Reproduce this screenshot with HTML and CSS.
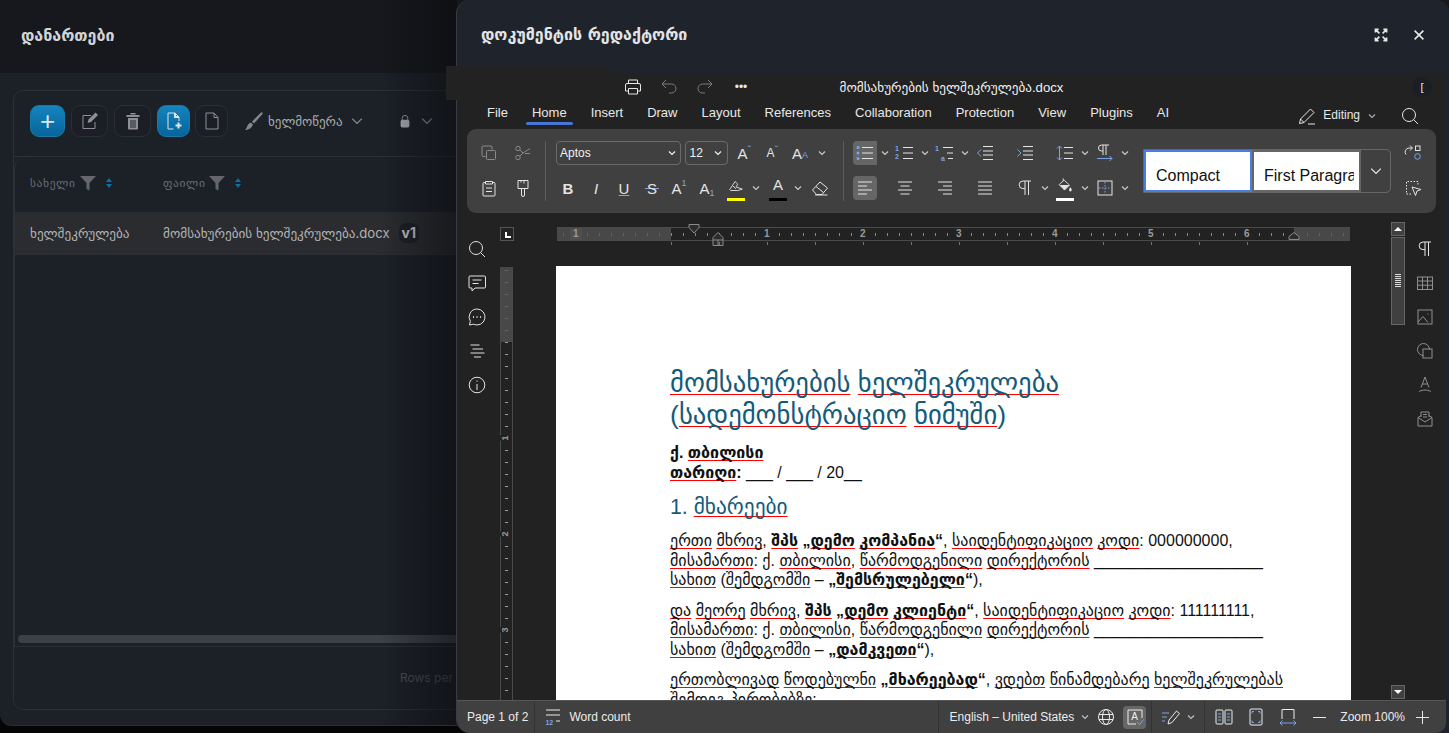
FILE: index.html
```html
<!DOCTYPE html>
<html lang="ka">
<head>
    <meta charset="UTF-8">
    <meta name="viewport" content="width=device-width, initial-scale=1.0">
    <title>დანართები</title>
    <link rel="stylesheet" href="styles.css">
</head>
<body>
    <svg class="sprite" xmlns="http://www.w3.org/2000/svg">
        <symbol id="i-caret" viewBox="0 0 10 10"><path d="M2 3.500l3 3 3-3"/></symbol>
        <symbol id="i-print" viewBox="0 0 20 20"><path d="M5.500 6.500V3h9v3.500M5.500 14H2.500V8A1.500 1.500 0 0 1 4 6.500h12A1.500 1.500 0 0 1 17.500 8v6h-3M5.500 11.500h9V17h-9z"/></symbol>
        <symbol id="i-undo" viewBox="0 0 20 20"><path d="M7 3L3 7l4 4M3 7h9.500a4.500 4.500 0 0 1 0 9H10"/></symbol>
        <symbol id="i-redo" viewBox="0 0 20 20"><path d="M13 3l4 4-4 4M17 7H7.500a4.500 4.500 0 0 0 0 9H10"/></symbol>
        <symbol id="i-copy" viewBox="0 0 20 20"><path d="M6.500 13.500H4a1 1 0 0 1-1-1V4a1 1 0 0 1 1-1h8a1 1 0 0 1 1 1v2.500"/><rect x="7.500" y="7.500" width="9" height="9" rx="1"/></symbol>
        <symbol id="i-cut" viewBox="0 0 20 20"><circle cx="5" cy="5.500" r="2.200"/><circle cx="5" cy="14.500" r="2.200"/><path d="M6.800 6.800L10 10l-3.200 3.200M10 10l7-4.500M12 10.500h5"/></symbol>
        <symbol id="i-paste" viewBox="0 0 20 20"><path d="M6.500 4.500H5a1 1 0 0 0-1 1V17a1 1 0 0 0 1 1h10a1 1 0 0 0 1-1V5.500a1 1 0 0 0-1-1h-1.500M6.500 3.500h7v2.500h-7zM7 10h6M7 13.500h6"/></symbol>
        <symbol id="i-painter" viewBox="0 0 20 20"><path d="M5 2.500h10v8H5zM11 2.500v3M8 2.500v2M5 10.500h3.500V17a1.500 1.500 0 0 0 3 0v-6.500H15"/></symbol>
        <symbol id="i-bullets" viewBox="0 0 20 20"><path d="M7 4.500h11M7 10h11M7 15.500h11"/><g class="accent-fill"><circle cx="3" cy="4.500" r="1.500"/><circle cx="3" cy="10" r="1.500"/><circle cx="3" cy="15.500" r="1.500"/></g></symbol>
        <symbol id="i-numbers" viewBox="0 0 20 20"><path d="M8 4.500h10M8 10h10M8 15.500h10"/></symbol>
        <symbol id="i-multi" viewBox="0 0 20 20"><path d="M8 4.500h10M12 10h6M13 15.500h5"/></symbol>
        <symbol id="i-outdent" viewBox="0 0 20 20"><path d="M8 3.500h10M8 8h10M8 12h10M8 16.500h10"/><path class="accent" d="M6 6.500L2.500 10 6 13.500"/></symbol>
        <symbol id="i-indent" viewBox="0 0 20 20"><path d="M8 3.500h10M8 8h10M8 12h10M8 16.500h10"/><path class="accent" d="M2.500 6.500L6 10l-3.500 3.500"/></symbol>
        <symbol id="i-spacing" viewBox="0 0 20 20"><path d="M9 4.500h9M9 10h9M9 15.500h9"/><path class="accent" d="M4.500 3v14M2 5.500L4.500 3 7 5.500M2 14.500L4.500 17 7 14.500"/></symbol>
        <symbol id="i-pilcrow-dir" viewBox="0 0 20 20"><path d="M8 2v10M11 2v10M14 2H6.500a3 3 0 0 0 0 6H8"/><path class="accent" d="M2 15.500h15M14.500 13l2.500 2.500-2.500 2.500"/></symbol>
        <symbol id="i-left" viewBox="0 0 20 20"><path d="M3 4h14M3 8h9M3 12h14M3 16h9"/></symbol>
        <symbol id="i-center" viewBox="0 0 20 20"><path d="M3 4h14M5.500 8h9M3 12h14M5.500 16h9"/></symbol>
        <symbol id="i-right" viewBox="0 0 20 20"><path d="M3 4h14M8 8h9M3 12h14M8 16h9"/></symbol>
        <symbol id="i-justify" viewBox="0 0 20 20"><path d="M3 4h14M3 8h14M3 12h14M3 16h14"/></symbol>
        <symbol id="i-pilcrow" viewBox="0 0 20 20"><path d="M10 3v14M13.500 3v14M16 3H8a3.800 3.800 0 0 0 0 7.600h2"/></symbol>
        <symbol id="i-fill" viewBox="0 0 20 20"><path d="M8 1.500v3M3.500 8.500L9 3.500l6 5.500-5.500 5.500z"/><path class="solid" d="M4 9h11l-5.500 5.500zM16 11.500c1 1.500 1.500 2 1.500 3a1.500 1.500 0 0 1-3 0c0-1 .5-1.500 1.500-3z"/></symbol>
        <symbol id="i-borders" viewBox="0 0 20 20"><rect x="3" y="3" width="14" height="14"/><path class="accent dotted" d="M10 4v12M4 10h12"/></symbol>
        <symbol id="i-highlight" viewBox="0 0 20 20"><path d="M3 14l6-9 3 3-2 3 7 2.500-5 1.500H4zM6.500 10l3.500 3"/></symbol>
        <symbol id="i-eraser" viewBox="0 0 20 20"><path d="M2.500 12l7.500-8 7.500 6-5.500 6.500H6.500zM6 8.500l7.500 6M5 17h12.500"/></symbol>
        <symbol id="i-replace" viewBox="0 0 20 20"><path d="M9 5H6a4 4 0 0 0-3 6.500M7 2.500L9.500 5 7 7.500"/><rect x="12.500" y="3" width="4.500" height="4.500"/><circle class="accent" cx="14.500" cy="13.500" r="2.800"/></symbol>
        <symbol id="i-select" viewBox="0 0 20 20"><path class="dotted" d="M8 16H3.500V3.500H15V8"/><path d="M9 9l9 2.500-4 1.500-1.500 4.500z"/></symbol>
        <symbol id="i-pen" viewBox="0 0 20 20"><path d="M2.500 17.500l1-4.500L13.500 3l3.500 3.500L7 16.500zM3.500 13l3.500 3.500M11 18h7"/></symbol>
        <symbol id="i-search" viewBox="0 0 20 20"><circle cx="9" cy="9" r="6.500"/><path d="M13.800 13.800L18 18"/></symbol>
        <symbol id="i-comment" viewBox="0 0 20 20"><path d="M3 3h14.500a1 1 0 0 1 1 1v10a1 1 0 0 1-1 1H8l-3 3v-3H3a1 1 0 0 1-1-1V4a1 1 0 0 1 1-1zM5.500 7h9M5.500 10.500h6"/></symbol>
        <symbol id="i-chat" viewBox="0 0 20 20"><path d="M10 2a8 8 0 1 1-3.500 15.200L2.500 18l.8-3.800A8 8 0 0 1 10 2z"/><path class="thick" d="M6 10h.9M9.600 10h.9M13.200 10h.9"/></symbol>
        <symbol id="i-toc" viewBox="0 0 20 20"><path d="M3.500 4h9M5.500 8h10.500M3.500 12h14M7 16h7"/></symbol>
        <symbol id="i-info" viewBox="0 0 20 20"><circle cx="10" cy="10" r="7.800"/><path d="M10 9v6M10 5.500v1.200"/></symbol>
        <symbol id="i-table" viewBox="0 0 20 20"><rect x="2.500" y="4" width="15" height="12.500"/><path d="M2.500 8h15M2.500 12.200h15M7.500 4v12.500M12.500 4v12.500"/></symbol>
        <symbol id="i-image" viewBox="0 0 20 20"><rect x="3" y="3" width="14" height="14"/><path d="M3 15l5-5.500 5 6M12.500 7h1"/></symbol>
        <symbol id="i-shape" viewBox="0 0 20 20"><path d="M8.500 14.500a6 6 0 1 1 6-6"/><rect x="8" y="8" width="9" height="9"/></symbol>
        <symbol id="i-arttext" viewBox="0 0 20 20"><path d="M6 12.500L10 2l4 10.500M7.200 9h5.600M4 16.500c4-2 8-2 12 0"/></symbol>
        <symbol id="i-mail" viewBox="0 0 20 20"><path d="M6 8V3h8v5M3 8.500l3-2M17 8.500l-3-2M3 8.500V17h14V8.500L10 13zM8 5.500h4M8 8h4"/></symbol>
        <symbol id="i-wordcount" viewBox="0 0 20 20"><path d="M3 3h14M3 8h14M13 14h4"/></symbol>
        <symbol id="i-globe" viewBox="0 0 20 20"><circle cx="10" cy="10" r="7.500"/><ellipse cx="10" cy="10" rx="3.500" ry="7.500"/><path d="M3 7.500h14M3 12.500h14"/></symbol>
        <symbol id="i-spell" viewBox="0 0 20 20"><path d="M11 17H3V3h14v8"/><path class="accent" d="M12 15l2.500 2.500 4-5"/></symbol>
        <symbol id="i-track" viewBox="0 0 20 20"><path class="accent" d="M1 6h7M1 10h5M1 14h3"/><path d="M7 17l1-4 7.500-9 3 2.500-7.500 9z"/></symbol>
        <symbol id="i-pages" viewBox="0 0 20 20"><rect x="2" y="3" width="7" height="14" rx="1"/><rect x="11" y="3" width="7" height="14" rx="1"/><path class="accent" d="M3.800 7h3.400M3.800 10h3.400M3.800 13h3.400M12.800 7h3.400M12.800 10h3.400M12.800 13h3.400"/></symbol>
        <symbol id="i-fitpage" viewBox="0 0 20 20"><rect x="4" y="2" width="12" height="16" rx="1"/><path class="accent" d="M6 6.500V4.500h2M14 6.500V4.500h-2M6 13.500v2h2M14 13.500v2h-2"/></symbol>
        <symbol id="i-fitwidth" viewBox="0 0 20 20"><path d="M4 12V2.500h12V12"/><path class="accent" d="M2 16h16M4.500 13.500L2 16l2.500 2.500M15.500 13.500L18 16l-2.500 2.500"/></symbol>
        <symbol id="i-funnel" viewBox="0 0 16 16"><path class="solid" d="M0 1h16L9.500 8v7.500l-3-1.500V8z"/></symbol>
        <symbol id="i-edit" viewBox="0 0 20 20"><path d="M15 11v6.500H3v-13h8"/><path class="solid" d="M7.500 12l1-3.500L15.500 1.500 18 4l-7 7z"/></symbol>
        <symbol id="i-trash" viewBox="0 0 20 20"><path class="solid" d="M3.500 4h13v2h-13zM7.500 2h5v1.500h-5zM5 7h10v10.500a1 1 0 0 1-1 1H6a1 1 0 0 1-1-1z"/><path class="cut" d="M8 9v8M10 9v8M12 9v8"/></symbol>
        <symbol id="i-docadd" viewBox="0 0 20 20"><path d="M9.500 18H4V2h7l4 4v4"/><path class="thick" d="M11 2v4h4M14.500 11.500v6M11.500 14.500h6"/></symbol>
        <symbol id="i-doc" viewBox="0 0 20 20"><path d="M4 2h8l4 4.500V18H4zM12 2v4.500h4"/></symbol>
        <symbol id="i-brush" viewBox="0 0 20 20"><path class="solid" d="M8 10.500L17.500 1l1.500 1.500L10 12.500zM7 11.500l2 2c-1 3-4 5.500-8 5.500 2.500-1.500 1.500-6 6-7.500z"/></symbol>
        <symbol id="i-lock" viewBox="0 0 20 20"><path d="M6.500 9V6.500a3.500 3.500 0 0 1 7 0V9"/><rect class="solid" x="4.500" y="8.500" width="11" height="9.500" rx="2"/></symbol>
        <symbol id="i-expand" viewBox="0 0 20 20"><path class="thick" d="M12 8l5-5M13 3h4v4M8 8L3 3M7 3H3v4M12 12l5 5M13 17h4v-4M8 12l-5 5M7 17H3v-4"/></symbol>
        <symbol id="i-close" viewBox="0 0 20 20"><path class="thick" d="M4.500 4.500l11 11M15.500 4.500l-11 11"/></symbol>
        <symbol id="i-tab-down" viewBox="0 0 12 10"><path d="M1 .5h10v3L6 9 1 3.500z"/></symbol>
        <symbol id="i-tab-up" viewBox="0 0 12 14"><path d="M6 .5l5 5v8H1v-8zM1 8h10M6 8v5.500"/></symbol>
        <symbol id="i-tab-end" viewBox="0 0 12 8"><path d="M6 .5l5 4v3H1v-3z"/></symbol>
    </svg>

    <div class="back-panel">
        <header class="back-head">დანართები</header>
        <div class="card">
            <div class="card-tools">
                <button class="tool-btn primary plus">+</button>
                <button class="tool-btn wide"><svg class="ic"><use href="#i-edit"/></svg></button>
                <button class="tool-btn wide"><svg class="ic"><use href="#i-trash"/></svg></button>
                <button class="tool-btn primary"><svg class="ic"><use href="#i-docadd"/></svg></button>
                <button class="tool-btn last"><svg class="ic"><use href="#i-doc"/></svg></button>
                <span class="tool-menu">
                    <svg class="ic"><use href="#i-brush"/></svg>
                    ხელმოწერა
                    <svg class="caret-lg"><use href="#i-caret"/></svg>
                </span>
                <span class="tool-menu lock-menu">
                    <svg class="ic-sm"><use href="#i-lock"/></svg>
                    <svg class="caret-lg"><use href="#i-caret"/></svg>
                </span>
            </div>
            <div class="table-wrap">
                <div class="t-head">
                    <div class="t-col first">სახელი <svg class="funnel"><use href="#i-funnel"/></svg><span class="sort"></span></div>
                    <div class="t-col">ფაილი <svg class="funnel"><use href="#i-funnel"/></svg><span class="sort"></span></div>
                </div>
                <div class="t-row">
                    <div class="t-col first">ხელშეკრულება</div>
                    <div class="t-col">მომსახურების ხელშეკრულება.docx <span class="badge">v1</span></div>
                </div>
                <div class="t-space"></div>
                <div class="h-scroll"></div>
            </div>
            <div class="card-foot">Rows per</div>
        </div>
    </div>

    <aside class="drawer">
        <header class="drawer-head">
            <h2>დოკუმენტის რედაქტორი</h2>
            <svg class="head-ic"><use href="#i-expand"/></svg>
            <svg class="head-ic close"><use href="#i-close"/></svg>
        </header>

        <div class="editor">
            <div class="title-bar">
                <div class="quick">
                    <svg class="ic"><use href="#i-print"/></svg>
                    <svg class="ic dim"><use href="#i-undo"/></svg>
                    <svg class="ic dim"><use href="#i-redo"/></svg>
                    <span class="dots">•••</span>
                </div>
                <div class="doc-name">მომსახურების ხელშეკრულება.docx</div>
                <div class="avatar">[</div>
            </div>

            <nav class="tabs">
                <a>File</a><a class="active">Home</a><a>Insert</a><a>Draw</a><a>Layout</a><a>References</a><a>Collaboration</a><a>Protection</a><a>View</a><a>Plugins</a><a>AI</a>
                <span class="tabs-right">
                    <svg class="ic"><use href="#i-pen"/></svg>
                    <span class="edit-label">Editing</span>
                    <svg class="caret"><use href="#i-caret"/></svg>
                    <svg class="ic search"><use href="#i-search"/></svg>
                </span>
            </nav>

            <div class="ribbon">
                <div class="rb-clip">
                    <span class="cell dim"><svg class="ic"><use href="#i-copy"/></svg></span>
                    <span class="cell dim"><svg class="ic"><use href="#i-cut"/></svg></span>
                    <span class="cell"><svg class="ic"><use href="#i-paste"/></svg></span>
                    <span class="cell"><svg class="ic"><use href="#i-painter"/></svg></span>
                </div>
                <div class="rb-sep"></div>
                <div class="rb-font">
                    <div class="font-top">
                        <span class="combo font-name">Aptos<svg class="caret"><use href="#i-caret"/></svg></span>
                        <span class="combo font-size">12<svg class="caret"><use href="#i-caret"/></svg></span>
                        <span class="cell w28 letter">A<i class="up">ˆ</i></span>
                        <span class="cell w28 letter small">A<i class="up">ˇ</i></span>
                        <span class="cell w28 letter">A<i class="lo">A</i></span>
                        <span class="cell w16"><svg class="caret"><use href="#i-caret"/></svg></span>
                    </div>
                    <div class="font-bottom">
                        <span class="cell letter"><b>B</b></span>
                        <span class="cell letter"><em>I</em></span>
                        <span class="cell letter"><u>U</u></span>
                        <span class="cell letter strike">S</span>
                        <span class="cell letter">A<i class="sup">1</i></span>
                        <span class="cell letter">A<i class="sub">1</i></span>
                        <span class="cell stack"><svg class="ic"><use href="#i-highlight"/></svg><i class="swatch yellow"></i></span>
                        <span class="cell"><svg class="caret"><use href="#i-caret"/></svg></span>
                        <span class="cell stack letter">A<i class="swatch black"></i></span>
                        <span class="cell"><svg class="caret"><use href="#i-caret"/></svg></span>
                        <span class="cell"><svg class="ic"><use href="#i-eraser"/></svg></span>
                    </div>
                </div>
                <div class="rb-sep"></div>
                <div class="rb-para">
                    <span class="cell on"><svg class="ic"><use href="#i-bullets"/></svg></span>
                    <span class="cell"><svg class="caret"><use href="#i-caret"/></svg></span>
                    <span class="cell"><svg class="ic"><use href="#i-numbers"/></svg><i class="mini top">1</i><i class="mini bot">2</i></span>
                    <span class="cell"><svg class="caret"><use href="#i-caret"/></svg></span>
                    <span class="cell"><svg class="ic"><use href="#i-multi"/></svg><i class="mini top">1</i><i class="mini bot shifted">a</i></span>
                    <span class="cell"><svg class="caret"><use href="#i-caret"/></svg></span>
                    <span class="cell"><svg class="ic"><use href="#i-outdent"/></svg></span>
                    <span class="cell"></span>
                    <span class="cell"><svg class="ic"><use href="#i-indent"/></svg></span>
                    <span class="cell"></span>
                    <span class="cell"><svg class="ic"><use href="#i-spacing"/></svg></span>
                    <span class="cell"><svg class="caret"><use href="#i-caret"/></svg></span>
                    <span class="cell"><svg class="ic"><use href="#i-pilcrow-dir"/></svg></span>
                    <span class="cell"><svg class="caret"><use href="#i-caret"/></svg></span>

                    <span class="cell on round"><svg class="ic"><use href="#i-left"/></svg></span>
                    <span class="cell"></span>
                    <span class="cell"><svg class="ic"><use href="#i-center"/></svg></span>
                    <span class="cell"></span>
                    <span class="cell"><svg class="ic"><use href="#i-right"/></svg></span>
                    <span class="cell"></span>
                    <span class="cell"><svg class="ic"><use href="#i-justify"/></svg></span>
                    <span class="cell"></span>
                    <span class="cell"><svg class="ic"><use href="#i-pilcrow"/></svg></span>
                    <span class="cell"><svg class="caret"><use href="#i-caret"/></svg></span>
                    <span class="cell stack"><svg class="ic"><use href="#i-fill"/></svg><i class="swatch white"></i></span>
                    <span class="cell"><svg class="caret"><use href="#i-caret"/></svg></span>
                    <span class="cell"><svg class="ic"><use href="#i-borders"/></svg></span>
                    <span class="cell"><svg class="caret"><use href="#i-caret"/></svg></span>
                </div>
                <div class="styles">
                    <div class="style-item selected">Compact</div>
                    <div class="style-item"><span>First Paragraph</span></div>
                    <div class="style-more"><svg class="caret-lg"><use href="#i-caret"/></svg></div>
                </div>
                <div class="rb-tail">
                    <span class="cell"><svg class="ic"><use href="#i-replace"/></svg></span>
                    <span class="cell"><svg class="ic"><use href="#i-select"/></svg></span>
                </div>
            </div>

            <div class="ed-body">
                <div class="side side-left">
                    <svg class="ic"><use href="#i-search"/></svg>
                    <svg class="ic"><use href="#i-comment"/></svg>
                    <svg class="ic"><use href="#i-chat"/></svg>
                    <svg class="ic"><use href="#i-toc"/></svg>
                    <svg class="ic"><use href="#i-info"/></svg>
                </div>

                <div class="ed-main">
                    <div class="ruler-row">
                        <div class="ruler-corner"></div>
                        <div class="h-ruler">
                            <div class="hr-margin left"></div>
                            <div class="hr-mid"></div>
                            <div class="hr-margin right"></div>
                            <span class="hr-num on-margin" style="left:13px">1</span>
                            <span class="hr-num" style="left:204px">1</span>
                            <span class="hr-num" style="left:300px">2</span>
                            <span class="hr-num" style="left:396px">3</span>
                            <span class="hr-num" style="left:492px">4</span>
                            <span class="hr-num" style="left:588px">5</span>
                            <span class="hr-num" style="left:684px">6</span>
                            <svg class="marker m-top"><use href="#i-tab-down"/></svg>
                            <svg class="marker m-first"><use href="#i-tab-up"/></svg>
                            <svg class="marker m-last"><use href="#i-tab-end"/></svg>
                        </div>
                    </div>
                    <div class="doc-row">
                        <div class="v-ruler">
                            <div class="vr-margin"></div>
                            <span class="vr-num" style="top:166px">1</span>
                            <span class="vr-num" style="top:262px">2</span>
                            <span class="vr-num" style="top:358px">3</span>
                        </div>
                        <article class="page">
                            <h1><span class="sp">მომსახურების</span> <span class="sp">ხელშეკრულება</span><br>(<span class="sp">სადემონსტრაციო</span> <span class="sp">ნიმუში</span>)</h1>
                            <p class="lines"><b>ქ. <span class="sp">თბილისი</span></b><br><b><span class="sp">თარიღი</span>:</b> ___ / ___ / 20__</p>
                            <h3>1. <span class="sp">მხარეები</span></h3>
                            <p><span class="sp">ერთი</span> <span class="sp">მხრივ</span>, <b><span class="sp">შპს</span> „<span class="sp">დემო</span> <span class="sp">კომპანია</span>“</b>, <span class="sp">საიდენტიფიკაციო</span> <span class="sp">კოდი</span>: 000000000,<br><span class="sp">მისამართი</span>: ქ. <span class="sp">თბილისი</span>, <span class="sp">წარმოდგენილი</span> <span class="sp">დირექტორის</span> ___________________<br><span class="sp">სახით</span> (<span class="sp">შემდგომში</span> – <b>„<span class="sp">შემსრულებელი</span>“</b>),</p>
                            <p><span class="sp">და</span> <span class="sp">მეორე</span> <span class="sp">მხრივ</span>, <b><span class="sp">შპს</span> „<span class="sp">დემო</span> <span class="sp">კლიენტი</span>“</b>, <span class="sp">საიდენტიფიკაციო</span> <span class="sp">კოდი</span>: 111111111,<br><span class="sp">მისამართი</span>: ქ. <span class="sp">თბილისი</span>, <span class="sp">წარმოდგენილი</span> <span class="sp">დირექტორის</span> ___________________<br><span class="sp">სახით</span> (<span class="sp">შემდგომში</span> – <b>„<span class="sp">დამკვეთი</span>“</b>),</p>
                            <p><span class="sp">ერთობლივად</span> <span class="sp">წოდებულნი</span> <b>„<span class="sp">მხარეებად</span>“</b>, <span class="sp">ვდებთ</span> <span class="sp">წინამდებარე</span> <span class="sp">ხელშეკრულებას</span><br>შემდეგ პირობებზე:</p>
                        </article>
                    </div>
                </div>

                <div class="v-scroll">
                    <div class="vs-btn"><i class="arrow-up"></i></div>
                    <div class="vs-thumb"><i class="grip"></i></div>
                    <div class="vs-btn down"><i class="arrow-down"></i></div>
                </div>

                <div class="side side-right">
                    <svg class="ic bright"><use href="#i-pilcrow"/></svg>
                    <svg class="ic"><use href="#i-table"/></svg>
                    <svg class="ic"><use href="#i-image"/></svg>
                    <svg class="ic"><use href="#i-shape"/></svg>
                    <svg class="ic"><use href="#i-arttext"/></svg>
                    <svg class="ic"><use href="#i-mail"/></svg>
                </div>
            </div>

            <footer class="status">
                <span class="st-text page-no">Page 1 of 2</span>
                <span class="st-sep"></span>
                <span class="wc"><svg class="ic"><use href="#i-wordcount"/></svg><i class="mini count">12</i></span>
                <span class="st-text">Word count</span>
                <span class="st-sep push"></span>
                <span class="st-text lang">English – United States</span>
                <svg class="caret"><use href="#i-caret"/></svg>
                <svg class="ic globe"><use href="#i-globe"/></svg>
                <span class="spell-on"><svg class="ic"><use href="#i-spell"/></svg><i class="spell-a">A</i></span>
                <span class="st-sep s2"></span>
                <svg class="ic track"><use href="#i-track"/></svg>
                <svg class="caret tc"><use href="#i-caret"/></svg>
                <span class="st-sep s3"></span>
                <svg class="ic v1"><use href="#i-pages"/></svg>
                <svg class="ic v2"><use href="#i-fitpage"/></svg>
                <svg class="ic v2"><use href="#i-fitwidth"/></svg>
                <span class="zoom-minus"></span>
                <span class="st-text zoom">Zoom 100%</span>
                <span class="zoom-plus"></span>
            </footer>
        </div>
    </aside>

    <div class="patch"></div>
</body>
</html>
```

FILE: styles.css
```css
* {
    box-sizing: border-box;
}

html,
body {
    margin: 0;
    height: 100%;
    overflow: hidden;
}

body {
    position: relative;
    background-color: #050506;
    color: #e6e6e6;
    font-family: "Liberation Sans", "DejaVu Sans", sans-serif;
}

.sprite {
    position: absolute;
    width: 0;
    height: 0;
}

/* shared icon styles */
.ic,
.ic-sm,
.caret,
.caret-lg,
.head-ic,
.funnel {
    fill: none;
    stroke: currentColor;
    stroke-width: 1;
    flex: none;
}

.ic {
    width: 20px;
    height: 20px;
}

.ic-sm {
    width: 16px;
    height: 16px;
}

.caret {
    width: 10px;
    height: 10px;
    stroke-width: 1.2;
}

.caret-lg {
    width: 16px;
    height: 16px;
    stroke-width: .8;
}

.accent {
    stroke: #7aa5e8;
}

.accent-fill {
    fill: #7aa5e8;
    stroke: none;
}

.dotted {
    stroke-dasharray: 1.500 1.500;
}

.thick {
    stroke-width: 2;
}

.solid {
    fill: currentColor;
    stroke: none;
}

.cut {
    stroke: #23262c;
    stroke-width: 1;
}

.mini {
    position: absolute;
    left: 0;
    font-style: normal;
    font-weight: 700;
    font-size: 7px;
    line-height: 8px;
    color: #7aa5e8;
}

.mini.top {
    top: 4px;
}

.mini.bot {
    top: 12px;
}

.mini.shifted {
    left: 6px;
    top: 14px;
}

.mini.count {
    left: 2px;
    top: 12px;
}

.spell-a {
    position: absolute;
    left: 8px;
    top: 5px;
    font-style: normal;
    font-size: 10px;
    line-height: 12px;
    color: #eeeeee;
}

/* panel behind the drawer */
.back-panel {
    height: 726px;
    background-color: #1c2027;
    border-radius: 0 0 12px 12px;
    border-bottom: 1px solid #2b2e35;
    font-family: Inter, "DejaVu Sans", sans-serif;
    position: relative;
    overflow: hidden;
}

.back-panel::after {
    content: "";
    position: absolute;
    top: 0;
    bottom: 0;
    left: 380px;
    width: 77px;
    background: linear-gradient(90deg, rgba(8, 9, 12, 0), rgba(8, 9, 12, .55));
}

.back-head {
    height: 73px;
    background-color: #16181d;
    padding-left: 21px;
    line-height: 71px;
    font-size: 16px;
    font-weight: 700;
    color: #d3d4d6;
}

.card {
    margin: 17px 0 0 13px;
    height: 620px;
    border: 1px solid #2c3038;
    border-radius: 10px;
    display: flex;
    flex-direction: column;
}

.card-tools {
    height: 66px;
    flex: none;
    display: flex;
    align-items: center;
    gap: 6px;
    padding: 0 0 6px 16px;
    border-bottom: 1px solid #2c3038;
}

.tool-btn {
    width: 33px;
    height: 32px;
    border-radius: 9px;
    border: 1px solid #2b2e35;
    background-color: #1b1e24;
    color: #8e9095;
    display: flex;
    align-items: center;
    justify-content: center;
    padding: 0;
}

.tool-btn.wide {
    width: 37px;
}

.tool-btn.last {
    margin-left: -1px;
}

.tool-btn.primary {
    background: linear-gradient(#1583bd, #07659b);
    border-color: #1679ad;
    color: #d9e6ee;
}

.tool-btn.plus {
    width: 35px;
    font: 26px/30px "Liberation Sans", sans-serif;
}

.tool-menu {
    display: flex;
    align-items: center;
    gap: 4px;
    margin-left: 10px;
    font-size: 13px;
    color: #a9abae;
    white-space: nowrap;
}

.tool-menu .ic {
    color: #85878b;
}

.tool-menu .caret-lg {
    margin-left: 2px;
    color: #8a8c90;
}

.lock-menu {
    margin-left: 26px;
    gap: 4px;
}

.table-wrap {
    height: 490px;
    flex: none;
    display: flex;
    flex-direction: column;
    border-left: 1px solid #2c3038;
    border-radius: 12px 0 0 0;
    border-bottom: 1px solid #2c3038;
}

.t-head,
.t-row {
    display: flex;
    align-items: center;
    padding-left: 15px;
    flex: none;
}

.t-head {
    height: 56px;
    padding-bottom: 3px;
    font-size: 11.500px;
    letter-spacing: .6px;
    color: #6b6e74;
    border-bottom: 1px solid #282b32;
}

.t-row {
    height: 42px;
    padding-bottom: 2px;
    background-color: #2a2c30;
    font-size: 13.200px;
    color: #b2b3b5;
    border-bottom: 1px solid #2c2f35;
}

.t-col {
    display: flex;
    align-items: center;
    white-space: nowrap;
}

.t-col.first {
    width: 133px;
}

.funnel {
    width: 16px;
    height: 16px;
    margin-left: 4px;
    color: #64666b;
}

.sort {
    position: relative;
    width: 7px;
    height: 10px;
    margin-left: 10px;
}

.sort::before,
.sort::after {
    content: "";
    position: absolute;
    left: 0;
    width: 0;
    height: 0;
    border-left: 3.500px solid transparent;
    border-right: 3.500px solid transparent;
}

.sort::before {
    top: 0;
    border-bottom: 4px solid #0b6fa8;
}

.sort::after {
    bottom: 0;
    border-top: 4px solid #0b6fa8;
}

.badge {
    margin-left: 9px;
    width: 20px;
    height: 20px;
    border-radius: 7px;
    background-color: #1e2026;
    color: #c4c5c7;
    font-weight: 700;
    font-size: 14px;
    text-align: center;
    line-height: 20px;
}

.t-space {
    flex: 1;
}

.h-scroll {
    height: 8px;
    margin: 0 0 3px 3px;
    border-radius: 4px 0 0 4px;
    background-color: #3c4048;
}

.card-foot {
    padding: 23px 0 0 386px;
    font-size: 12px;
    color: #4b4e55;
}

/* drawer with the editor */
.drawer {
    position: absolute;
    top: 0;
    left: 456px;
    right: 0;
    bottom: 0;
    background-color: #1f232b;
    border-left: 1px solid #383c44;
    border-radius: 14px 12px 0 14px;
    padding-right: 3px;
    display: flex;
    flex-direction: column;
    overflow: hidden;
}

.drawer-head {
    height: 73px;
    flex: none;
    display: flex;
    align-items: center;
    padding-left: 24px;
}

.drawer-head h2 {
    margin: 0;
    flex: 1;
    padding-bottom: 4px;
    font-size: 16px;
    font-weight: 700;
    font-family: "DejaVu Sans", sans-serif;
    color: #e3e4e6;
}

.head-ic {
    width: 16px;
    height: 16px;
    color: #e8e8e8;
    margin: 0 0 3px 22px;
}

.head-ic.close {
    margin-right: 19px;
}

/* piece of the editor that sticks out past the drawer edge */
.patch {
    position: absolute;
    left: 446px;
    top: 66px;
    width: 164px;
    height: 34px;
    background-color: #222222;
}

.editor {
    flex: 1;
    min-height: 0;
    background-color: #222222;
    display: flex;
    flex-direction: column;
    border-radius: 0 0 10px 10px;
    overflow: hidden;
}

.title-bar {
    height: 27px;
    flex: none;
    position: relative;
    font-size: 13.200px;
}

.quick {
    position: absolute;
    left: 166px;
    top: 4px;
    display: flex;
    gap: 16px;
    align-items: center;
}

.quick .dim {
    color: #7c7c7c;
}

.dots {
    font-size: 12px;
    width: 20px;
    text-align: center;
}

.doc-name {
    text-align: center;
    padding-top: 7px;
    color: #f0f0f0;
}

.avatar {
    position: absolute;
    right: 14px;
    top: 4px;
    width: 20px;
    height: 20px;
    border-radius: 50%;
    background-color: #1b1e24;
    text-align: center;
    line-height: 20px;
    font-size: 11px;
}

.tabs {
    height: 29px;
    flex: none;
    display: flex;
    gap: 12px;
    padding-left: 24px;
    font-size: 13px;
    line-height: 25px;
    color: #e8e8e8;
}

.tabs a {
    padding: 0 6px;
    height: 25px;
    position: relative;
}

.tabs a.active::after {
    content: "";
    position: absolute;
    left: 0;
    right: 0;
    bottom: 0;
    height: 3px;
    border-radius: 2px;
    background-color: #4575d6;
}

.tabs-right {
    margin-left: auto;
    display: flex;
    align-items: center;
    height: 29px;
    padding: 2px 26px 0 0;
    font-size: 12px;
    gap: 6px;
}

.edit-label {
    color: #e8e8e8;
}

.tabs-right .caret {
    margin-left: 1px;
    color: #aaa;
}

.tabs-right .search {
    margin-left: 17px;
}

.ribbon {
    height: 84px;
    flex: none;
    margin: 0 10px;
    padding: 12px 0 0 5px;
    background-color: #404040;
    border-radius: 9px;
    display: flex;
    align-items: flex-start;
}

.cell {
    width: 20px;
    height: 24px;
    display: flex;
    align-items: center;
    justify-content: center;
    position: relative;
    color: #e4e4e4;
}

.cell.dim {
    color: #8a8a8a;
}

.cell > .caret {
    color: #c8c8c8;
}

.rb-clip {
    display: grid;
    grid-template-columns: 34px 34px;
    row-gap: 11px;
    width: 68px;
}

.rb-clip .cell {
    width: 34px;
}

.rb-sep {
    width: 1px;
    height: 60px;
    background-color: #5c5c5c;
    margin: 0 8px 0 5px;
    flex: none;
}

.rb-font {
    width: 276px;
    flex: none;
    margin-right: 8px;
}

.font-top {
    display: flex;
    height: 24px;
    padding-left: 2px;
}

.font-bottom {
    display: grid;
    grid-template-columns: 28px 28px 28px 28px 26px 30px 28px 12px 32px 8px 36px;
    margin-top: 11px;
}

.font-bottom .cell {
    width: auto;
}

.combo {
    height: 24px;
    border: 1px solid #6a6a6a;
    border-radius: 4px;
    display: flex;
    align-items: center;
    justify-content: space-between;
    padding: 0 3px;
    font-size: 12px;
    color: #f0f0f0;
}

.font-name {
    width: 125px;
    margin-right: 4px;
}

.font-size {
    width: 44px;
    padding: 0 4px;
    margin-right: 2px;
}

.w28 {
    width: 28px;
}

.w16 {
    width: 16px;
}

.letter {
    font-size: 15px;
    font-style: normal;
}

.letter.small {
    font-size: 12px;
}

.letter i {
    font-style: normal;
    color: #7aa5e8;
    font-size: 9px;
    line-height: 1;
}

.letter i.up {
    align-self: flex-start;
    margin-top: 4px;
    font-size: 11px;
}

.letter i.lo {
    align-self: flex-end;
    margin-bottom: 5px;
}

.letter i.sup {
    align-self: flex-start;
    margin-top: 3px;
}

.letter i.sub {
    align-self: flex-end;
    margin-bottom: 2px;
}

.letter u {
    text-decoration-color: #7aa5e8;
}

.letter.strike {
    background: linear-gradient(#7aa5e8, #7aa5e8) center 50% / 14px 1px no-repeat;
}

.stack {
    flex-direction: column;
    justify-content: flex-start;
}

.stack .ic {
    width: 18px;
    height: 18px;
    margin-top: 1px;
}

.swatch {
    position: absolute;
    left: calc(50% - 9px);
    bottom: -1px;
    width: 18px;
    height: 3px;
}

.swatch.yellow {
    background-color: #ffff00;
}

.swatch.black {
    background-color: #000000;
}

.swatch.white {
    background-color: #ffffff;
}

.rb-para {
    display: grid;
    grid-template-columns: repeat(14, 20px);
    row-gap: 11px;
    width: 280px;
    margin-left: 3px;
    flex: none;
}

.cell.on {
    width: 24px;
    margin-left: -2px;
    background-color: #666666;
    border-radius: 4px 0 0 4px;
}

.cell.on.round {
    border-radius: 4px;
}

.styles {
    width: 248px;
    height: 44px;
    margin: 8px 0 0 8px;
    flex: none;
    display: flex;
    background-color: #505050;
    border: 1px solid #666666;
    border-radius: 0 5px 5px 0;
    font-size: 16px;
    color: #111111;
}

.style-item {
    width: 109px;
    background-color: #ffffff;
    border: 2px solid #666;
    padding: 14px 0 0 10px;
    white-space: nowrap;
    overflow: hidden;
    line-height: 20px;
}

.style-item.selected {
    width: 108px;
    border-color: #4a7de0;
}

.style-item span {
    display: block;
    width: 90px;
    overflow: hidden;
}

.style-more {
    flex: 1;
    background-color: #404040;
    display: flex;
    align-items: center;
    justify-content: center;
    color: #e6e6e6;
    border-radius: 0 5px 5px 0;
}

.rb-tail {
    display: grid;
    row-gap: 11px;
    margin-left: 12px;
}

.ed-body {
    flex: 1;
    min-height: 0;
    display: flex;
    overflow: hidden;
}

.side {
    flex: none;
    display: flex;
    flex-direction: column;
    align-items: center;
    gap: 14px;
    padding-top: 26px;
}

.side-left {
    width: 39px;
    color: #e2e2e2;
}

.side-right {
    width: 40px;
    color: #8f8f8f;
}

.side-right .bright {
    color: #e8e8e8;
}

.ed-main {
    width: 895px;
    flex: none;
    display: flex;
    flex-direction: column;
    min-height: 0;
}

.ruler-row {
    height: 53px;
    flex: none;
    display: flex;
    padding: 14px 0 0 4px;
}

.ruler-corner {
    width: 14px;
    height: 14px;
    border: 1px solid #555;
    background: linear-gradient(#fff, #fff) 4px 4px / 2px 6px no-repeat, linear-gradient(#fff, #fff) 4px 8px / 6px 2px no-repeat;
}

.h-ruler {
    position: relative;
    margin-left: 43px;
    width: 793px;
    height: 14px;
    display: flex;
    border-top: 1px solid #4a4a4a;
    border-bottom: 1px solid #4a4a4a;
    background:
        repeating-linear-gradient(90deg, #888 0 1px, transparent 1px 12px) 6px 50% / 100% 3px no-repeat;
}

.h-ruler::after {
    content: "";
    position: absolute;
    left: 114px;
    right: 57px;
    top: 14px;
    height: 3px;
    background: repeating-linear-gradient(90deg, #777 0 1px, transparent 1px 48px);
}

.hr-margin {
    background-color: #565656;
    opacity: .75;
}

.hr-margin.left {
    width: 114px;
}

.hr-margin.right {
    width: 56px;
}

.hr-mid {
    flex: 1;
}

.hr-num {
    position: absolute;
    top: 0;
    font-size: 10px;
    line-height: 12px;
    font-weight: 700;
    color: #9a9a9a;
    padding: 0 3px;
    background-color: #222;
}

.hr-num.on-margin {
    background-color: #4f4f4f;
}

.marker {
    position: absolute;
    fill: #2c2c2c;
    stroke: #8a8a8a;
    stroke-width: 1;
}

.m-top {
    left: 131px;
    top: -4px;
    width: 12px;
    height: 10px;
}

.m-first {
    left: 155px;
    top: 4px;
    width: 12px;
    height: 14px;
}

.m-last {
    left: 731px;
    top: 4px;
    width: 12px;
    height: 8px;
}

.doc-row {
    flex: 1;
    min-height: 0;
    display: flex;
}

.v-ruler {
    position: relative;
    width: 13px;
    margin: 1px 0 0 4px;
    flex: none;
    border-left: 1px solid #4a4a4a;
    border-right: 1px solid #4a4a4a;
    background:
        repeating-linear-gradient(180deg, #999 0 1px, transparent 1px 12px) 50% 3px / 3px 100% no-repeat;
}

.vr-margin {
    height: 75px;
    background-color: #565656;
    opacity: .75;
}

.vr-num {
    position: absolute;
    left: 1px;
    font-size: 9px;
    line-height: 10px;
    font-weight: 700;
    color: #9a9a9a;
    background-color: #222;
    transform: rotate(-90deg);
}

.page {
    margin-left: 43px;
    width: 795px;
    padding: 101px 0 0 114px;
    background-color: #ffffff;
    color: #111111;
    font-size: 16px;
    line-height: 19.500px;
    white-space: nowrap;
    overflow: hidden;
}

.page h1 {
    margin: 0 0 12px;
    font-size: 26.670px;
    line-height: 32px;
    font-weight: 400;
    color: #155a78;
}

.page h3 {
    margin: 0 0 11px;
    font-size: 21.330px;
    line-height: 26px;
    font-weight: 400;
    color: #155a78;
}

.page p {
    margin: 0 0 11px;
}

.page .lines {
    margin-bottom: 12px;
}

.sp {
    text-decoration: underline #ff0000 1px;
    text-underline-offset: 2px;
    text-decoration-skip-ink: none;
}

.v-scroll {
    width: 14px;
    flex: none;
    display: flex;
    flex-direction: column;
    padding: 9px 0 1px;
}

.vs-btn {
    height: 14px;
    border: 1px solid #666;
    background-color: #404040;
    display: flex;
    align-items: center;
    justify-content: center;
    flex: none;
}

.vs-btn.down {
    margin-top: auto;
}

.arrow-up,
.arrow-down {
    width: 0;
    height: 0;
    border-left: 4px solid transparent;
    border-right: 4px solid transparent;
}

.arrow-up {
    border-bottom: 4px solid #fff;
}

.arrow-down {
    border-top: 4px solid #fff;
}

.vs-thumb {
    height: 88px;
    margin-top: 1px;
    border: 1px solid #666;
    background-color: #404040;
    display: flex;
    align-items: center;
    justify-content: center;
    flex: none;
}

.grip {
    width: 6px;
    height: 14px;
    background: repeating-linear-gradient(180deg, #ddd 0 1px, transparent 1px 2px);
}

.status {
    height: 33px;
    flex: none;
    display: flex;
    align-items: center;
    background-color: #404040;
    border-top: 1px solid #555;
    font-size: 12px;
    color: #ececec;
}

.st-text {
    white-space: nowrap;
}

.page-no {
    margin-left: 10px;
}

.st-sep {
    width: 1px;
    height: 32px;
    background-color: #333;
    flex: none;
    margin-left: 6px;
}

.st-sep.push {
    margin-left: auto;
    margin-right: 11px;
}

.wc {
    position: relative;
    display: flex;
    margin: 0 6px 0 8px;
}

.status > .caret {
    margin-left: 6px;
    color: #c0c0c0;
}

.globe {
    margin-left: 6px;
}

.spell-on {
    position: relative;
    width: 23px;
    height: 23px;
    margin-left: 7px;
    border-radius: 4px;
    background-color: #666;
    display: flex;
    align-items: center;
    justify-content: center;
}

.st-sep.s2 {
    margin-left: 5px;
}

.track {
    margin-left: 9px;
}

.status > .tc {
    margin-left: 5px;
}

.st-sep.s3 {
    margin-left: 8px;
}

.v1 {
    margin-left: 9px;
}

.v2 {
    margin-left: 12px;
}

.zoom-minus,
.zoom-plus {
    position: relative;
    width: 13px;
    height: 13px;
    flex: none;
    background: linear-gradient(#e8e8e8, #e8e8e8) 0 6px / 13px 1px no-repeat;
}

.zoom-minus {
    margin-left: 15px;
}

.zoom-plus {
    margin: 0 17px 0 11px;
    background:
        linear-gradient(#e8e8e8, #e8e8e8) 0 6px / 13px 1px no-repeat,
        linear-gradient(#e8e8e8, #e8e8e8) 6px 0 / 1px 13px no-repeat;
}

.zoom {
    margin-left: 14px;
}
```
